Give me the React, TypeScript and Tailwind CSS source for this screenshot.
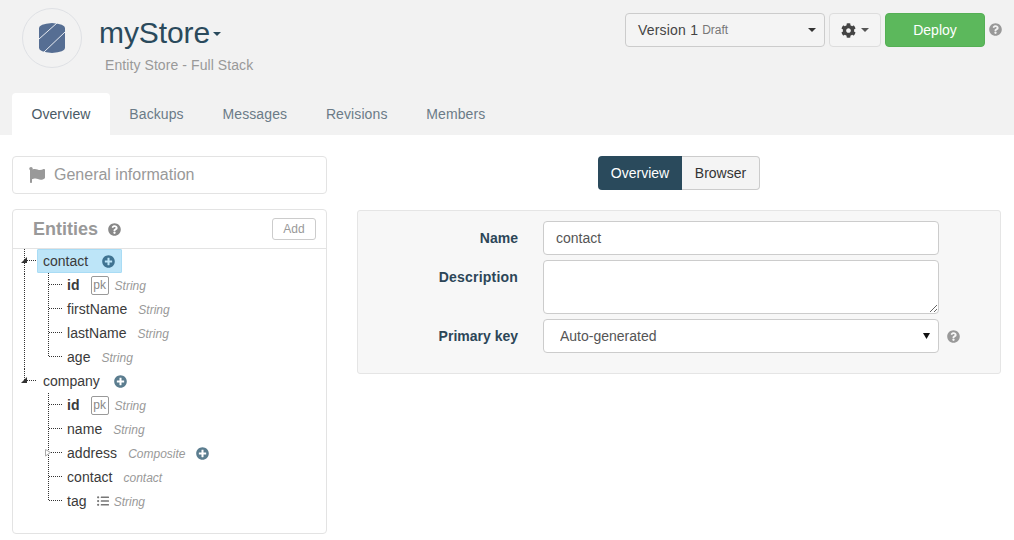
import React from 'react';
import { FaCog, FaFlag, FaListUl, FaPlusCircle, FaQuestionCircle } from 'react-icons/fa';

const tabs = ['Overview', 'Backups', 'Messages', 'Revisions', 'Members'];

const Caret = ({ className = '' }: { className?: string }) => (
  <span className={`inline-block w-0 h-0 border-x-4 border-x-transparent border-t-4 ${className}`} />
);

// dotted tree connector, one per row
const Connector = ({ last, width, open, closed }: { last?: boolean; width: number; open?: boolean; closed?: boolean }) => (
  <svg width={width} height={24} className="shrink-0 overflow-visible">
    <line x1={4.5} y1={0} x2={4.5} y2={last ? 12 : 24} stroke="#333" strokeDasharray="1 1" />
    <line x1={5} y1={11.5} x2={width - 1} y2={11.5} stroke="#333" strokeDasharray="1 1" />
    {open && <path d="M1 14 L7 14 L7 8 Z" fill="#333" />}
    {closed && <path d="M1.5 8.5 L6.5 11.5 L1.5 15 Z" fill="#fff" stroke="#aaa" />}
  </svg>
);

const Field = ({ name, bold, pk, type, list, plus, last, closed }: { name: string; bold?: boolean; pk?: boolean; type: string; list?: boolean; plus?: boolean; last?: boolean; closed?: boolean }) => (
  <div className="flex items-center h-6 pl-[19px]">
    <Connector width={19} last={last} closed={closed} />
    <span className={`ml-[4px] text-[14px] text-[#3a3a3a] tracking-[0.05px] ${bold ? 'font-bold' : ''}`}>{name}</span>
    {pk && <span className="ml-[11px] w-[18px] h-[19px] flex items-center justify-center border border-[#999] rounded-[2px] text-[12px] text-[#888]">pk</span>}
    {list && <FaListUl className="ml-[10px] w-3 h-3 text-[#777]" />}
    <span className={`${pk ? 'ml-[6px]' : list ? 'ml-[5px]' : 'ml-[11px]'} pt-[1px] text-[12px] italic text-[#999]`}>{type}</span>
    {plus && <FaPlusCircle className="ml-[10px] w-[13px] h-[13px] text-[#5b7d8f]" />}
  </div>
);

export default function App() {
  return (
    <div className="w-[1014px] h-[540px] overflow-hidden bg-white font-['Liberation_Sans',Arial,sans-serif] text-[14px] text-[#333]">
      <div className="h-[135px] bg-[#f2f2f2] flex flex-col justify-between">
        <div className="flex justify-between">
          <div className="flex pl-[22px] pt-2">
            <div className="w-[60px] h-[60px] rounded-full border border-[#dfe1e5] flex items-center justify-center">
              <svg width="26" height="30" viewBox="0 0 26 30">
                <path d="M0 5 Q0 1 13 0 Q26 1 26 5 V25 Q26 29 13 30 Q0 29 0 25 Z" fill="#566e93" />
                <path d="M0 16 L18 0 M5 29 L26 9" stroke="#e8ecf2" strokeWidth="1" fill="none" />
              </svg>
            </div>
            <div className="ml-[17px]">
              <div className="flex items-center h-[49px]">
                <span className="text-[30px] leading-none text-[#2a4a5c] tracking-[-0.1px]">myStore</span>
                <Caret className="ml-[3px] mt-[2px] border-t-[#2a4a5c]" />
              </div>
              <div className="ml-[6px] -mt-[2px] text-[14px] text-[#999] tracking-[0.08px]">Entity Store - Full Stack</div>
            </div>
          </div>
          <div className="flex items-start pt-[13px] pr-[12px]">
            <div className="w-[200px] h-[34px] border border-[#ccc] rounded bg-[#f4f4f4] flex items-center pl-[12px] pr-[8px]">
              <span className="text-[14px] text-[#444] tracking-[0.2px]">Version 1</span>
              <span className="ml-[4px] text-[12px] text-[#777]">Draft</span>
              <Caret className="ml-auto border-t-[#333]" />
            </div>
            <div className="ml-1 w-[52px] h-[34px] border border-[#ddd] rounded bg-[#f4f4f4] flex items-center justify-center gap-[5px]">
              <FaCog className="w-[15px] h-[15px] text-[#444]" />
              <Caret className="border-t-[#555]" />
            </div>
            <div className="ml-1 w-[100px] h-[34px] rounded bg-[#5cb85c] border border-[#55b055] flex items-center justify-center text-white text-[14px]">Deploy</div>
            <FaQuestionCircle className="ml-1 mt-[10px] w-[13px] h-[13px] text-[#999]" />
          </div>
        </div>
        <div className="flex pl-3">
          {tabs.map((t, i) => (
            <div key={t} className={`h-[42px] px-[19.4px] flex items-center rounded-t text-[14px] tracking-[0.1px] ${i === 0 ? 'bg-white text-[#4a5a66]' : 'text-[#6b7b87]'}`}>{t}</div>
          ))}
        </div>
      </div>

      <div className="flex pt-[21px] pl-3">
        <div className="w-[315px]">
          <div className="h-[38px] border border-[#e3e3e3] rounded flex items-center pl-4">
            <FaFlag className="w-4 h-4 text-[#999]" />
            <span className="ml-[9px] text-[16px] text-[#999]">General information</span>
          </div>
          <div className="mt-[15px] h-[325px] border border-[#e3e3e3] rounded">
            <div className="h-[39px] border-b border-[#e3e3e3] flex items-center pl-5 pr-[10px]">
              <span className="text-[18px] font-bold text-[#999]">Entities</span>
              <FaQuestionCircle className="ml-[10px] w-[13px] h-[13px] text-[#888]" />
              <div className="ml-auto w-[44px] h-[22px] border border-[#ccc] rounded-[3px] flex items-center justify-center text-[12px] text-[#999]">Add</div>
            </div>
            <div className="pl-[7px]">
              <div className="flex items-center h-6">
                <Connector width={17} open />
                <div className="h-6 w-[85px] bg-[#bde5f8] border border-[#a9dcf5] rounded-[1px] flex items-center pl-[5px]">
                  <span className="text-[14px] text-[#3a3a3a]">contact</span>
                  <FaPlusCircle className="ml-[14px] w-[13px] h-[13px] text-[#3f7391]" />
                </div>
              </div>
              <div className="ml-[4px] border-l border-dotted border-[#333]">
                <Field name="id" bold pk type="String" />
                <Field name="firstName" type="String" />
                <Field name="lastName" type="String" />
                <Field name="age" type="String" last />
              </div>
              <div className="flex items-center h-6">
                <Connector width={17} open last />
                <span className="ml-[6px] text-[14px] text-[#3a3a3a]">company</span>
                <FaPlusCircle className="ml-[14px] w-[13px] h-[13px] text-[#5b7d8f]" />
              </div>
              <div className="ml-[5px]">
                <Field name="id" bold pk type="String" />
                <Field name="name" type="String" />
                <Field name="address" type="Composite" plus closed />
                <Field name="contact" type="contact" />
                <Field name="tag" type="String" list last />
              </div>
            </div>
          </div>
        </div>

        <div className="ml-[30px] w-[644px]">
          <div className="flex justify-center">
            <div className="w-[84px] h-[34px] bg-[#2a4a5c] rounded-l flex items-center justify-center text-white text-[14px]">Overview</div>
            <div className="w-[78px] h-[34px] bg-[#f4f4f4] border border-l-0 border-[#ccc] rounded-r flex items-center justify-center text-[#333] text-[14px]">Browser</div>
          </div>
          <div className="mt-[20px] h-[164px] bg-[#f7f7f7] border border-[#e5e5e5] rounded-[3px] pt-[10px] grid grid-cols-[160px_396px_1fr] gap-x-[25px] content-start">
            <label className="h-[34px] flex items-center justify-end font-bold text-[14px] text-[#2c4658]">Name</label>
            <input readOnly value="contact" className="h-[34px] w-[396px] bg-white border border-[#ccc] rounded px-3 text-[14px] text-[#555] outline-none" />
            <span />
            <label className="mt-[5px] h-[34px] flex items-center justify-end font-bold text-[14px] text-[#2c4658] tracking-[0.2px]">Description</label>
            <textarea readOnly className="mt-[5px] h-[54px] w-[396px] bg-white border border-[#ccc] rounded px-3 py-1 outline-none block" />
            <span />
            <label className="mt-[5px] h-[34px] flex items-center justify-end font-bold text-[14px] text-[#2c4658]">Primary key</label>
            <div className="mt-[5px] relative w-[396px]">
              <select defaultValue="auto" className="h-[34px] w-full appearance-none bg-white border border-[#ccc] rounded pl-4 pr-3 text-[14px] text-[#555] outline-none">
                <option value="auto">Auto-generated</option>
              </select>
              <svg width="7" height="6" viewBox="0 0 7 6" className="absolute right-[9px] top-[14px]">
                <path d="M0 0 H7 L3.5 6 Z" fill="#111" />
              </svg>
            </div>
            <div className="mt-[5px] h-[34px] -ml-[17px] flex items-center">
              <FaQuestionCircle className="w-[13px] h-[13px] text-[#999]" />
            </div>
          </div>
        </div>
      </div>
    </div>
  );
}
